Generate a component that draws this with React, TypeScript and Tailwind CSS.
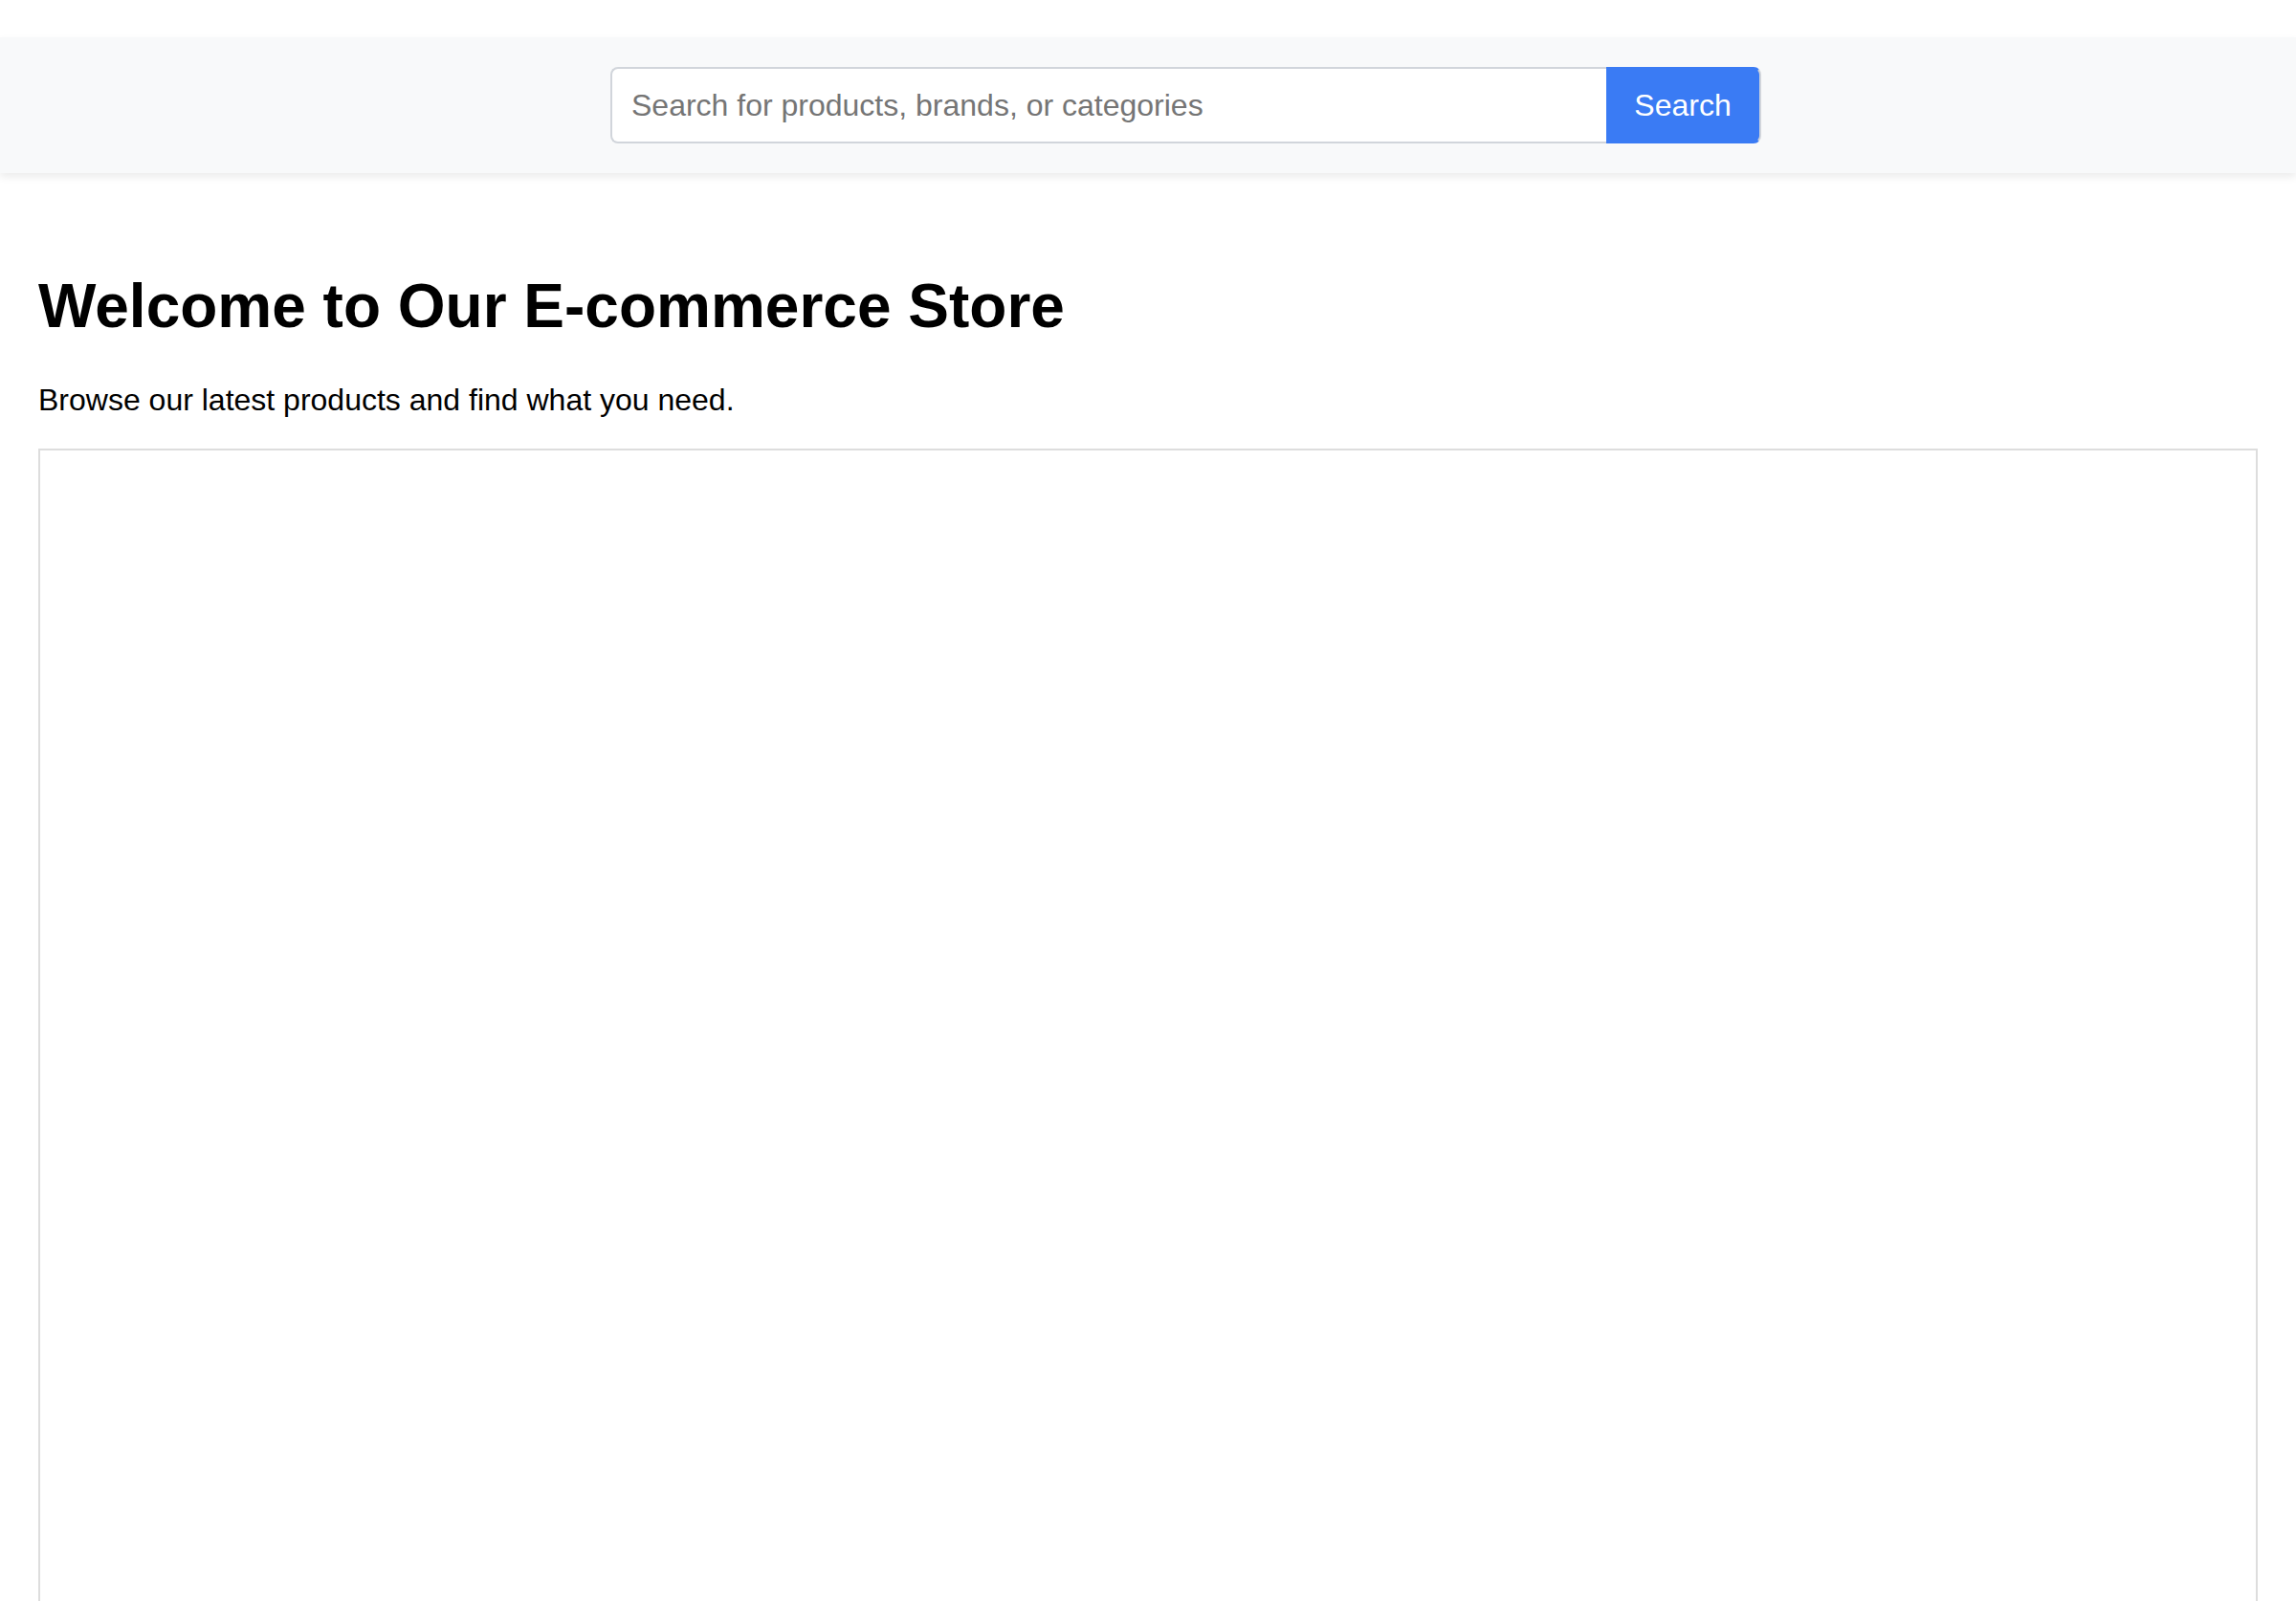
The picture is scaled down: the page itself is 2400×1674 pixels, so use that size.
export default function App() {
  return (
    <div className="min-h-screen bg-white font-['Liberation_Sans',Arial,sans-serif] text-black">
      {/* Search header */}
      <header className="mt-[39px] bg-[#f8f9fa] py-[31px] shadow-[0_4px_8px_rgba(0,0,0,0.08)]">
        <form className="ml-[638px] flex w-[1203px]" onSubmit={(e) => e.preventDefault()}>
          <input
            type="text"
            placeholder="Search for products, brands, or categories"
            className="h-[80px] flex-1 rounded-l-[8px] border-2 border-r-0 border-[#d1d5db] bg-white pl-[20px] text-[32px] text-black outline-none placeholder:text-[#757575]"
          />
          <button
            type="submit"
            className="h-[80px] w-[162px] rounded-r-[8px] border-y-2 border-r-2 border-y-[#3a7bf4] border-r-[#d1d5db] bg-[#3a7bf4] text-[32px] text-white"
          >
            Search
          </button>
        </form>
      </header>

      <main className="px-[40px]">
        <h1 className="mt-[102px] text-[64px] font-bold leading-[74px]">
          Welcome to Our E-commerce Store
        </h1>
        <p className="mt-[43px] text-[32px] leading-[37px]">
          Browse our latest products and find what you need.
        </p>

        {/* Product frame */}
        <div className="mt-[32px] h-[1300px] border-2 border-[#dddddd] bg-white" />
      </main>
    </div>
  )
}
